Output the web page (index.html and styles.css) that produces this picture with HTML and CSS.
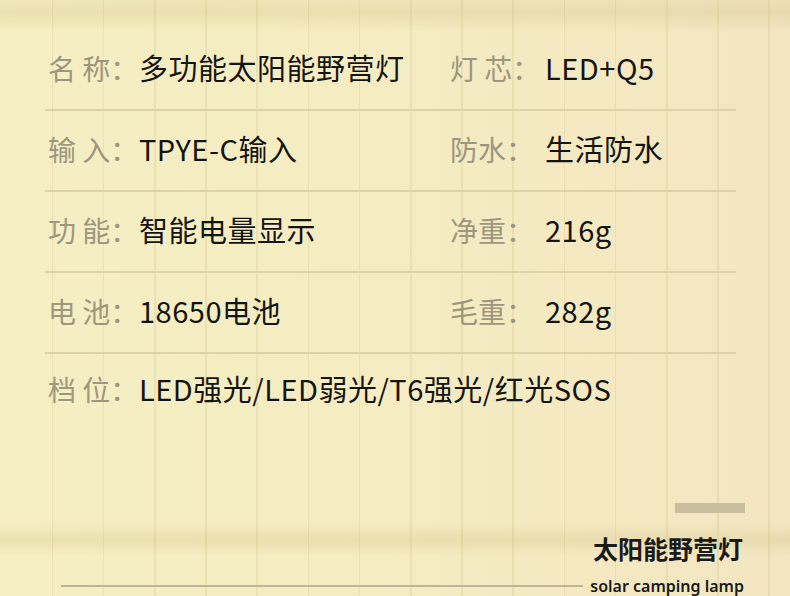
FILE: index.html
```html
<!DOCTYPE html>
<html lang="zh-CN">
<head>
<meta charset="utf-8">
<title>太阳能野营灯</title>
<link rel="stylesheet" href="styles.css">
</head>
<body>
<div class="page">
  <div class="specs">
    <div class="row">
      <span class="label">名 称：</span><span class="value">多功能太阳能野营灯</span>
      <span class="label">灯 芯：</span><span class="value">LED+Q5</span>
    </div>
    <div class="row">
      <span class="label">输 入：</span><span class="value">TPYE-C输入</span>
      <span class="label">防水：</span><span class="value">生活防水</span>
    </div>
    <div class="row">
      <span class="label">功 能：</span><span class="value">智能电量显示</span>
      <span class="label">净重：</span><span class="value">216g</span>
    </div>
    <div class="row">
      <span class="label">电 池：</span><span class="value">18650电池</span>
      <span class="label">毛重：</span><span class="value">282g</span>
    </div>
    <div class="row last">
      <span class="label">档 位：</span><span class="value wide">LED强光/LED弱光/T6强光/红光SOS</span>
    </div>
  </div>
  <div class="footer">
    <div class="bar"></div>
    <div class="title">太阳能野营灯</div>
    <div class="sub">
      <div class="rule"></div>
      <div class="sub-text">solar camping lamp</div>
    </div>
  </div>
</div>
</body>
</html>
```

FILE: styles.css
```css
html, body {
  margin: 0;
  padding: 0;
}
body {
  width: 790px;
  height: 596px;
  overflow: hidden;
  font-family: "Noto Sans CJK SC", "Noto Sans", sans-serif;
}
.page {
  width: 790px;
  height: 596px;
  box-sizing: border-box;
  padding-top: 30px;
  background:
    linear-gradient(180deg, rgba(196,176,110,0.12) 0px, rgba(196,176,110,0.22) 13px, rgba(196,176,110,0) 32px),
    linear-gradient(180deg, rgba(196,176,110,0) 522px, rgba(196,176,110,0.22) 540px, rgba(196,176,110,0) 556px),
    repeating-linear-gradient(90deg, rgba(205,190,130,0) 0px, rgba(205,190,130,0) 49.7px, rgba(205,190,130,0.26) 49.7px, rgba(205,190,130,0.26) 51.2px),
    linear-gradient(90deg, #f6efc3 0%, #f5ecc2 50%, #f3e6c1 100%);
  background-position: 0 0, 0 0, 2px 0, 0 0;
}
.specs {
  margin: 0 54px 0 45px;
  display: flex;
  flex-direction: column;
}
.row {
  height: 81px;
  box-sizing: border-box;
  padding: 0 0 4px 3px;
  border-bottom: 2px solid #dcd3ab;
  display: grid;
  grid-template-columns: 91px 311px 95px 1fr;
  align-items: center;
}
.row.last {
  height: 79px;
  padding-bottom: 10px;
  border-bottom: none;
}
.label {
  font-size: 28px;
  color: #9d977d;
  white-space: pre;
  line-height: 1;
}
.value {
  font-size: 29px;
  letter-spacing: 0.5px;
  color: #141414;
  line-height: 1;
  white-space: nowrap;
}
.value.wide {
  grid-column: 2 / 5;
}
.footer {
  margin: 70px 47px 0 61px;
  display: flex;
  flex-direction: column;
  align-items: flex-end;
}
.bar {
  width: 70px;
  height: 10px;
  margin-right: -2px;
  background: #c8bd9c;
}
.title {
  margin-top: 23px;
  font-size: 25px;
  line-height: 25px;
  font-weight: 700;
  color: #1a1a1a;
}
.sub {
  margin-top: 16px;
  width: 100%;
  display: flex;
  align-items: center;
  gap: 7px;
}
.rule {
  flex: 1;
  height: 2px;
  background: #bfb699;
}
.sub-text {
  font-family: "Noto Sans", "Open Sans", sans-serif;
  font-size: 16px;
  line-height: 18px;
  font-weight: 600;
  color: #1a1a1a;
  margin-right: -1px;
}
```
